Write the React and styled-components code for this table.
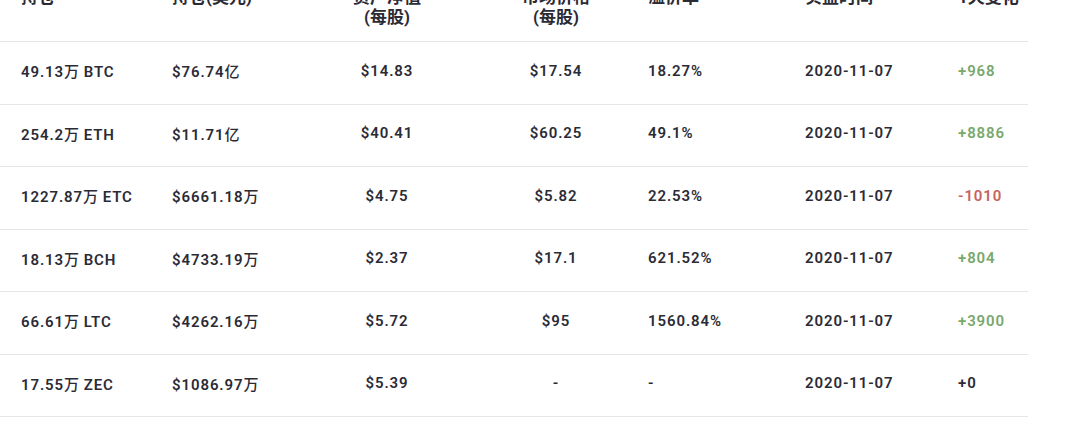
import styled, { createGlobalStyle } from 'styled-components';

const GlobalStyle = createGlobalStyle`
    html, body {
        margin: 0;
        padding: 0;
        background: #ffffff;
        overflow: hidden;
    }
`

const cols = '172px 138px 154px 184px 157px 153px 70px'

const Table = styled.div`
    width: 1028px;
    margin-top: -25px;
    font-family: "Roboto", "Noto Sans CJK SC", sans-serif;
    color: #2b2b36;
`

const HeadRow = styled.div`
    display: grid;
    grid-template-columns: ${cols};
    padding: 12px 0 14px;
    border-bottom: 1px solid #e6e6e6;
`

const HeadCell = styled.div`
    font-size: 17px;
    font-weight: 700;
    line-height: 20px;
    text-align: ${p => p.$center ? 'center' : 'left'};
    padding-left: ${p => p.$first ? '21px' : '0'};
    color: #2b2b36;
`

const Row = styled.div`
    display: grid;
    grid-template-columns: ${cols};
    align-items: center;
    height: 62.5px;
    padding-bottom: 4px;
    box-sizing: border-box;
    border-bottom: 1px solid #e6e6e6;
`

const Cell = styled.div`
    font-size: 15px;
    font-weight: 600;
    letter-spacing: 0.9px;
    text-align: ${p => p.$center ? 'center' : 'left'};
    padding-left: ${p => p.$first ? '21px' : '0'};
    color: ${p => p.$tone === 'up' ? '#78a86c' : p.$tone === 'down' ? '#c9625d' : '#2b2b36'};
    white-space: nowrap;
`

const Unit = styled.span`
    font-weight: 500;
    letter-spacing: 0;
`

const rows = [
    ['49.13', 'BTC', '$76.74', '亿', '$14.83', '$17.54', '18.27%', '+968'],
    ['254.2', 'ETH', '$11.71', '亿', '$40.41', '$60.25', '49.1%', '+8886'],
    ['1227.87', 'ETC', '$6661.18', '万', '$4.75', '$5.82', '22.53%', '-1010'],
    ['18.13', 'BCH', '$4733.19', '万', '$2.37', '$17.1', '621.52%', '+804'],
    ['66.61', 'LTC', '$4262.16', '万', '$5.72', '$95', '1560.84%', '+3900'],
    ['17.55', 'ZEC', '$1086.97', '万', '$5.39', '-', '-', '+0'],
]

function tone(v){
    if (v.startsWith('-')) return 'down'
    if (v === '+0') return 'flat'
    return 'up'
}

export default function App(){
    return(
        <>
        <GlobalStyle />
        <Table>
            <HeadRow>
                <HeadCell $first>持仓</HeadCell>
                <HeadCell>持仓(美元)</HeadCell>
                <HeadCell $center>资产净值<br/>(每股)</HeadCell>
                <HeadCell $center>市场价格<br/>(每股)</HeadCell>
                <HeadCell>溢价率</HeadCell>
                <HeadCell>实盘时间</HeadCell>
                <HeadCell>1天变化</HeadCell>
            </HeadRow>
            {rows.map((r, i) => (
                <Row key={i}>
                    <Cell $first>{r[0]}<Unit>万</Unit> {r[1]}</Cell>
                    <Cell>{r[2]}<Unit>{r[3]}</Unit></Cell>
                    <Cell $center>{r[4]}</Cell>
                    <Cell $center>{r[5]}</Cell>
                    <Cell>{r[6]}</Cell>
                    <Cell>2020-11-07</Cell>
                    <Cell $tone={tone(r[7])}>{r[7]}</Cell>
                </Row>
            ))}
        </Table>
        </>
    )
}
